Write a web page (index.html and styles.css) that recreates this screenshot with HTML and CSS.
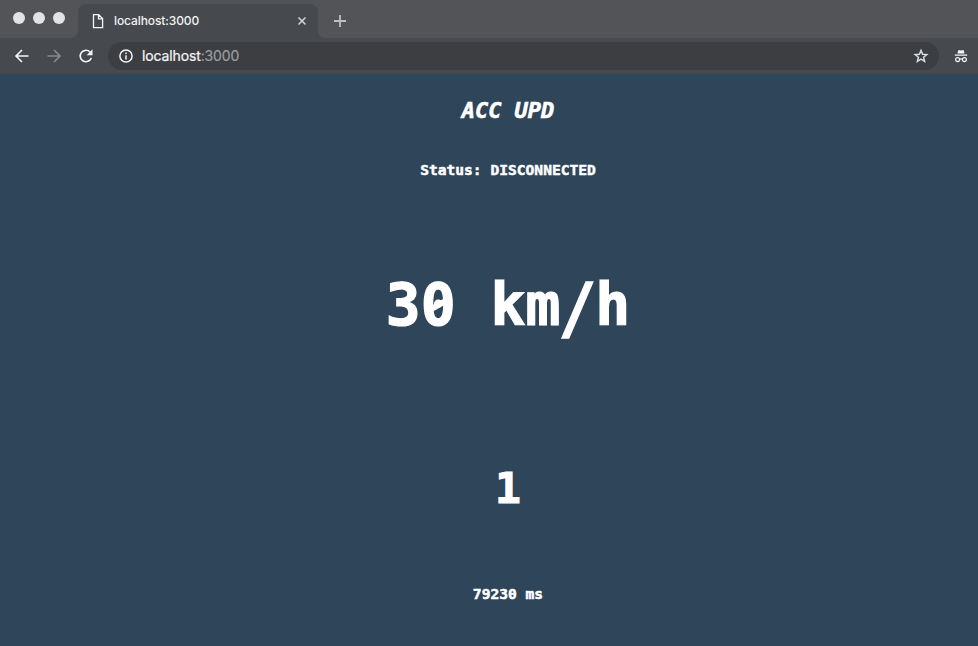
FILE: index.html
```html
<!DOCTYPE html>
<html lang="en">
<head>
<meta charset="utf-8">
<title>localhost:3000</title>
<link rel="stylesheet" href="styles.css">
</head>
<body>
<header class="browser">
  <div class="tabs">
    <div class="lights"><i></i><i></i><i></i></div>
    <div class="tab">
      <svg class="page" width="12" height="16" viewBox="0 0 12 16"><path d="M1.5 1.7h5.2l3.9 3.9v9H1.5zM6.5 1.7v4.1h4.1"/></svg>
      <span class="tab-title">localhost:3000</span>
      <svg class="close" width="10" height="10" viewBox="0 0 10 10"><path d="M1.5 1.5l7 7M8.5 1.5l-7 7"/></svg>
    </div>
    <svg class="plus" width="14" height="14" viewBox="0 0 14 14"><path d="M7 1v12M1 7h12"/></svg>
  </div>
  <div class="toolbar">
    <svg class="back" width="16" height="16" viewBox="0 0 16 16"><path d="M14.5 8H2.5M8 2L2 8l6 6"/></svg>
    <svg class="forward" width="16" height="16" viewBox="0 0 16 16"><path d="M1.5 8h12M8 2l6 6-6 6"/></svg>
    <svg class="reload" width="16" height="16" viewBox="0 0 16 16"><path d="M13.3 10A5.7 5.7 0 1 1 12 4"/><path class="fill" d="M14.5 1.3v5.9H8.6z"/></svg>
    <div class="address">
      <svg class="info" width="14" height="14" viewBox="0 0 14 14"><circle cx="7" cy="7" r="6.1"/><path d="M7 6.2v4.2M7 3.5v1.6"/></svg>
      <span class="url">localhost<span class="port">:3000</span></span>
      <svg class="star" width="16" height="16" viewBox="0 0 16 16"><path d="M8 2.4l1.6 3.9 4.2.3-3.2 2.7 1 4.1L8 11.2l-3.6 2.2 1-4.1-3.2-2.7 4.2-.3z"/></svg>
    </div>
    <svg class="incognito" width="14" height="14" viewBox="0 0 14 14"><path class="fill" d="M3.4 4.6L4.5.9 7 1.4 9.5.9l1.1 3.7zM.8 5.5h12.4v1.3H.8z"/><circle cx="3.6" cy="10.6" r="2"/><circle cx="10.4" cy="10.6" r="2"/><path d="M5.6 10.3q1.4-.8 2.8 0"/></svg>
  </div>
</header>
<main>
  <h1>ACC UPD</h1>
  <p class="status">Status: DISCONNECTED</p>
  <p class="speed">3<span class="zero">0</span> km<span class="slash">/</span>h</p>
  <p class="gear">1</p>
  <p class="time">79230 ms</p>
</main>
</body>
</html>
```
FILE: styles.css
```css
* { box-sizing: border-box; }
body {
  margin: 0;
  height: 646px;
  overflow: hidden;
  display: flex;
  flex-direction: column;
  background: #2f4559;
  color: #fff;
}
svg { display: block; flex: none; fill: none; stroke: #f4f5f6; stroke-width: 1.6; }
.fill { fill: #f4f5f6; stroke: none; }
.browser { flex: none; height: 74px; background: #46494d; font-family: Inter, "Liberation Sans", sans-serif; }
.tabs { display: flex; height: 38px; background: #535458; }
.lights { display: flex; gap: 8px; width: 78px; padding: 12px 0 0 13px; }
.lights i { width: 12px; height: 12px; border-radius: 50%; background: #e3e3e6; }
.tab {
  position: relative;
  display: flex;
  align-items: center;
  width: 240px;
  height: 34px;
  margin-top: 4px;
  padding: 0 11px 0 14px;
  border-radius: 8px 8px 0 0;
  background: #46494d;
}
.tab::before, .tab::after { content: ""; position: absolute; bottom: 0; width: 7px; height: 7px; }
.tab::before { left: -7px; background: radial-gradient(circle at 0 0, transparent 6.5px, #46494d 7px); }
.tab::after { right: -7px; background: radial-gradient(circle at 100% 0, transparent 6.5px, #46494d 7px); }
.page { stroke-width: 1.3; }
.tab-title { margin-left: 10px; padding-bottom: 1px; font-size: 12px; font-weight: 500; letter-spacing: -.1px; color: #f1f2f3; }
.close { margin-left: auto; stroke: #d4d5d7; stroke-width: 1.5; }
.plus { margin: 14px 0 0 15px; stroke: #bdbec1; stroke-width: 1.8; }
.toolbar { display: flex; align-items: center; height: 36px; padding: 0 10px 0 14px; }
.forward { margin-left: 16px; stroke: #898b8e; }
.reload { margin-left: 16px; }
.address {
  display: flex;
  align-items: center;
  width: 831px;
  height: 28px;
  margin-left: 14px;
  padding: 0 10px 0 11px;
  border-radius: 14px;
  background: #3c3e42;
}
.info { stroke-width: 1.5; }
.url { margin-left: 9px; padding-bottom: 1px; font-size: 14px; letter-spacing: -.13px; color: #f4f5f6; -webkit-text-stroke: .2px currentColor; }
.port { color: #9b9da0; }
.star { margin-left: auto; stroke: #d5dbe1; stroke-width: 1.5; }
.incognito { margin-left: 15px; stroke-width: 1.2; }
main {
  display: flex;
  flex-direction: column;
  align-items: center;
  padding: 22px 0 0 38px;
  font-family: "DejaVu Sans Mono", monospace;
  font-weight: 700;
  white-space: pre;
}
h1, p { margin: 0; }
h1 { font-size: 22px; font-style: italic; line-height: 30px; -webkit-text-stroke: .6px #fff; }
.status { margin-top: 34px; font-size: 14.6px; line-height: 20px; -webkit-text-stroke: .5px #fff; }
.speed { margin-top: 85px; font-size: 58px; line-height: 80px; -webkit-text-stroke: 1.2px #fff; }
.zero { position: relative; }
.zero::after {
  content: "";
  position: absolute;
  left: 9px;
  top: 31px;
  width: 17px;
  height: 6px;
  background: #fff;
  transform: rotate(-30deg);
}
.slash { display: inline-block; transform: translateY(3px) scale(1.08, 1.18); }
.gear { margin-top: 113px; font-size: 43px; line-height: 60px; -webkit-text-stroke: 1.2px #fff; }
.time { margin-top: 66px; font-size: 14.6px; line-height: 20px; -webkit-text-stroke: .5px #fff; }
```
